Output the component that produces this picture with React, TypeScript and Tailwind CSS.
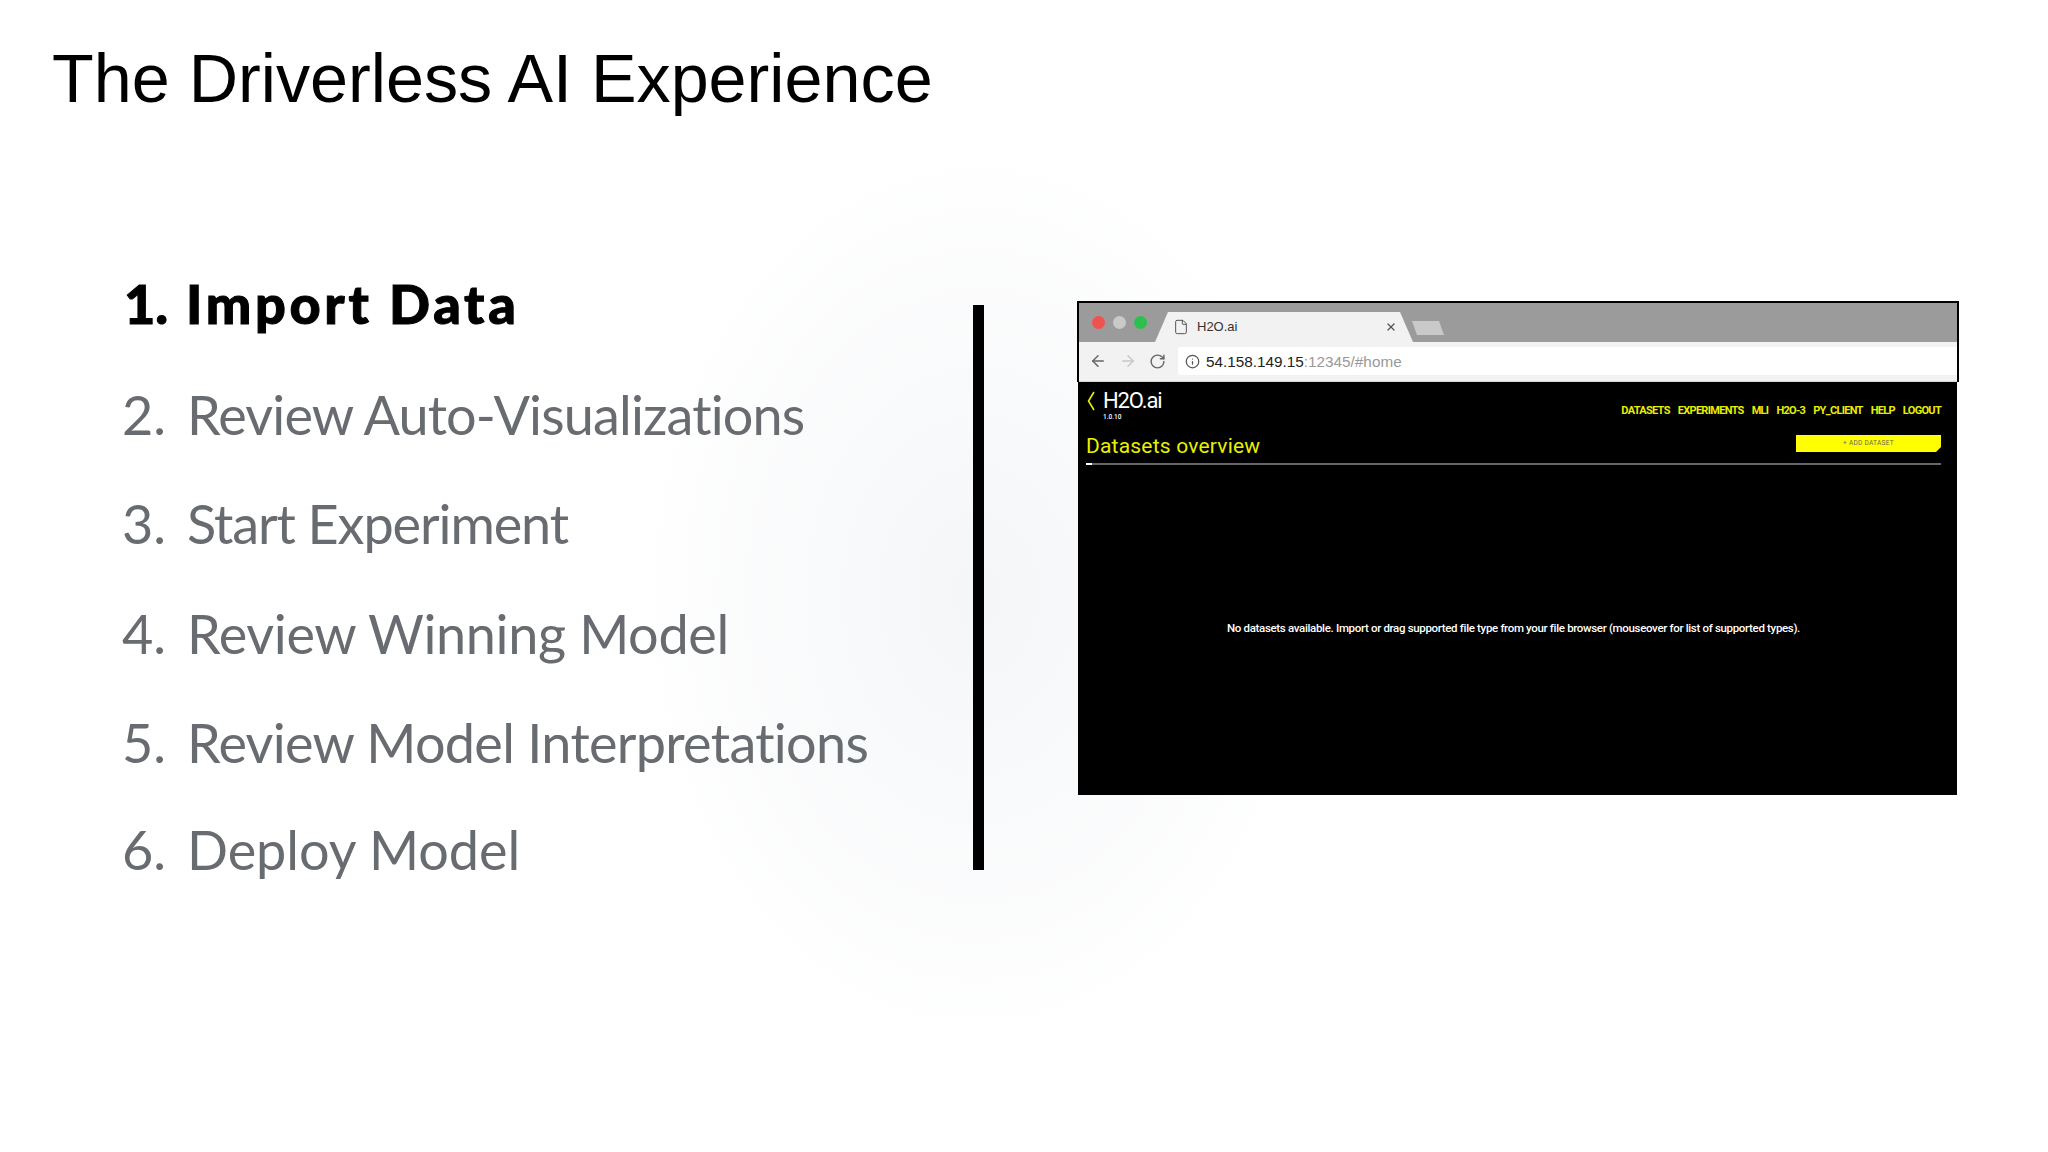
import { ArrowLeft, ArrowRight, File, Info, RotateCw, X } from "lucide-react";

const steps = [
  { label: "1.", text: "Import Data", style: "mt-0 pl-[2px] font-black text-black [-webkit-text-stroke:1px_black]", textStyle: "tracking-[3.7px]", labelWidth: "w-[62px]" },
  { label: "2.", text: "Review Auto-Visualizations", style: "mt-[51px] text-[#686c70]", textStyle: "tracking-[-0.85px]", labelWidth: "w-[65px]" },
  { label: "3.", text: "Start Experiment", style: "mt-[49px] text-[#686c70]", textStyle: "tracking-[-1.1px]", labelWidth: "w-[65px]" },
  { label: "4.", text: "Review Winning Model", style: "mt-[50px] text-[#686c70]", textStyle: "tracking-[-0.35px]", labelWidth: "w-[65px]" },
  { label: "5.", text: "Review Model Interpretations", style: "mt-[49px] text-[#686c70]", textStyle: "tracking-[-0.7px]", labelWidth: "w-[65px]" },
  { label: "6.", text: "Deploy Model", style: "mt-[47px] text-[#686c70]", textStyle: "tracking-[-0.05px]", labelWidth: "w-[65px]" },
];

const navItems = ["DATASETS", "EXPERIMENTS", "MLI", "H2O-3", "PY_CLIENT", "HELP", "LOGOUT"];

const BrowserChrome = () => (
  <div className="border-2 border-b-0 border-black font-['Liberation_Sans',sans-serif]">
    <div className="flex h-[39px] items-start bg-[#9b9b9b] pl-[13px]">
      <div className="mt-[13px] flex gap-[8px]">
        <span className="h-[13px] w-[13px] rounded-full bg-[#ef5350]" />
        <span className="h-[13px] w-[13px] rounded-full bg-[#c9c9c9]" />
        <span className="h-[13px] w-[13px] rounded-full bg-[#2ec04f]" />
      </div>
      <div className="ml-[8px] mt-[9px] flex h-[30px] w-[258px] items-center bg-[#f2f2f2] pl-[18px] pr-[16px] [clip-path:polygon(13px_0,245px_0,100%_100%,0_100%)]">
        <File className="h-[16px] w-[16px] text-[#555]" strokeWidth={1.5} />
        <span className="ml-[8px] flex-1 text-[13px] text-[#333]">H2O.ai</span>
        <X className="h-[12px] w-[12px] text-[#555]" strokeWidth={2.5} />
      </div>
      <div className="ml-[-1px] mt-[18px] h-[14px] w-[32px] bg-[#c9c9c9] [clip-path:polygon(0_0,27px_0,100%_100%,5px_100%)]" />
    </div>
    <div className="flex h-[40px] items-start border-b border-[#d5d5d5] bg-[#f2f2f2] pt-[5px]">
      <div className="flex h-[28px] w-[99px] items-center pl-[10px]">
        <ArrowLeft className="h-[18px] w-[18px] text-[#666]" strokeWidth={2} />
        <ArrowRight className="ml-[12px] h-[18px] w-[18px] text-[#c8c8c8]" strokeWidth={2} />
        <RotateCw className="ml-[12px] h-[17px] w-[17px] text-[#666]" strokeWidth={2} />
      </div>
      <div className="flex h-[28px] flex-1 items-center rounded-l-[3px] bg-white pl-[7px]">
        <Info className="h-[15px] w-[15px] text-[#555]" strokeWidth={2} />
        <span className="ml-[6px] mt-[2px] text-[15.3px] text-[#222]">
          54.158.149.15<span className="text-[#999]">:12345/#home</span>
        </span>
      </div>
    </div>
  </div>
);

const AppScreen = () => (
  <div className="ml-[1px] flex h-[413px] w-[879px] flex-col bg-black pl-[8px] pr-[16px] font-['Roboto',sans-serif]">
    <div className="flex items-start justify-between">
      <div className="flex pt-[7px]">
        <svg className="ml-[1px] mt-[2px] h-[20px] w-[8px] text-[#e8f000]" viewBox="0 0 8 20" fill="none" stroke="currentColor" strokeWidth={1.6}>
          <polyline points="7,1 1.5,10 7,19" />
        </svg>
        <div className="ml-[8px] text-white">
          <div className="text-[22px] leading-[24px] tracking-[-1.1px]">H2O.ai</div>
          <div className="text-[6.5px] font-medium leading-[8px]">1.0.10</div>
        </div>
      </div>
      <div className="mt-[22px] flex gap-[8px] text-[11px] font-bold leading-[14px] tracking-[-0.7px] text-[#e8f000]">
        {navItems.map((item) => (
          <span key={item}>{item}</span>
        ))}
      </div>
    </div>
    <div className="mt-[12px] flex items-start justify-between">
      <div className="text-[21px] leading-[26px] tracking-[0.2px] text-[#e8f000]">Datasets overview</div>
      <div className="mt-[2px] flex h-[17px] w-[145px] items-center justify-center bg-[#ffff00] text-[6.5px] tracking-[0.3px] text-[#666] [clip-path:polygon(0_0,100%_0,100%_12px,140px_100%,0_100%)]">
        + ADD DATASET
      </div>
    </div>
    <div className="relative mt-[4px] h-[2px] bg-[#666]">
      <div className="absolute left-0 top-0 h-[2px] w-[6px] bg-white" />
    </div>
    <div className="flex flex-1 items-center justify-center pb-[2px] text-[11.5px] font-medium tracking-[-0.33px] text-white">
      No datasets available. Import or drag supported file type from your file browser (mouseover for list of supported types).
    </div>
  </div>
);

export default function App() {
  return (
    <div className="h-[1152px] w-[2048px] overflow-hidden bg-white bg-[radial-gradient(ellipse_340px_450px_at_978px_595px,#f5f6f8_0%,#f9fafb_50%,#ffffff_100%)] font-['Liberation_Sans',sans-serif]">
      <h1 className="pl-[52px] pt-[38px] text-[68.3px] font-normal leading-[80px] text-black">
        The Driverless AI Experience
      </h1>

      <div className="mt-[156px] flex items-start">
        <ol className="ml-[122px] w-[851px] font-['Lato',sans-serif] text-[54px] leading-[60px]">
          {steps.map((step) => (
            <li key={step.label} className={`flex ${step.style}`}>
              <span className={step.labelWidth}>{step.label}</span>
              <span className={step.textStyle}>{step.text}</span>
            </li>
          ))}
        </ol>

        <div className="mt-[31px] h-[565px] w-[11px] bg-black" />

        <div className="ml-[93px] mt-[27px] w-[882px]">
          <BrowserChrome />
          <AppScreen />
        </div>
      </div>
    </div>
  );
}
